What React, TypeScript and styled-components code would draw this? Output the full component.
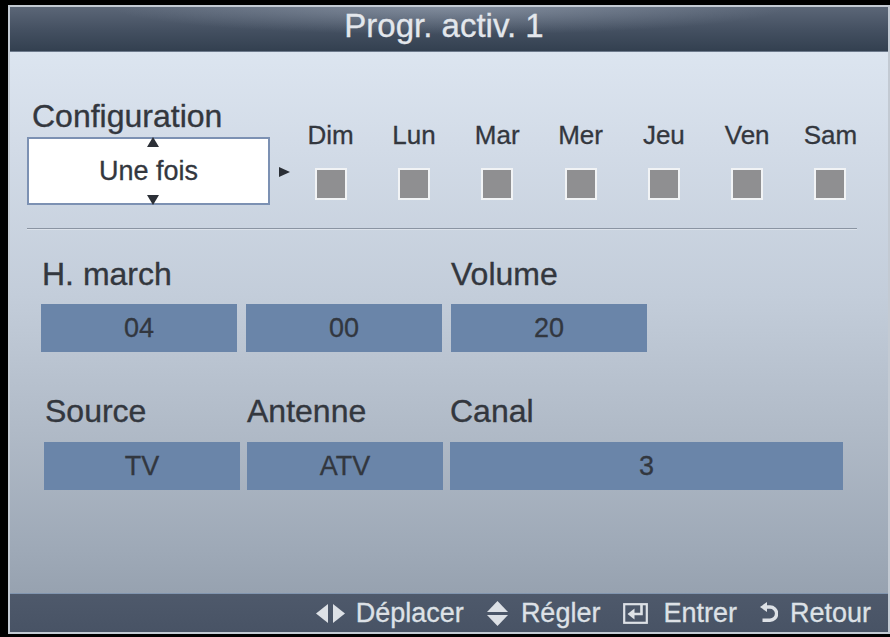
import React from "react";
import styled, { createGlobalStyle } from "styled-components";

const Global = createGlobalStyle`
  html, body { margin: 0; padding: 0; background: #000; }
  body { font-family: "Liberation Sans", Arial, Helvetica, sans-serif; }
  * { box-sizing: border-box; }
`;

const Screen = styled.div`
  margin: 5px 0 0 8px;
  width: 882px;
  height: 629px;
  border: 2px solid #c3cad3;
  display: flex;
  flex-direction: column;
  overflow: hidden;
`;

const Header = styled.header`
  flex: none;
  height: 45px;
  display: flex;
  justify-content: center;
  align-items: flex-start;
  padding-top: 2px;
  background:
    radial-gradient(ellipse 55% 90% at 50% 0%, rgba(185, 196, 212, 0.4), rgba(185, 196, 212, 0) 70%),
    linear-gradient(to bottom, #5b6677 0%, #434f60 55%, #334050 100%);
  border-bottom: 1px solid #6d7a8c;
`;

const Title = styled.h1`
  margin: 0 10px 0 0;
  font-weight: normal;
  font-size: 33px;
  line-height: 33px;
  color: #e3e7ec;
  -webkit-text-stroke: 0.3px #e3e7ec;
`;

const Body = styled.main`
  flex: 1;
  display: flex;
  flex-direction: column;
  background: linear-gradient(
    to bottom,
    #dce5f0 0%,
    #d2dbe7 18%,
    #c3cdda 45%,
    #b0bac7 70%,
    #9ea9b7 92%,
    #97a2b0 100%
  );
  color: #33373e;
`;

const TopSection = styled.section`
  display: flex;
  align-items: flex-start;
  padding: 48px 0 0 17px;
`;

const ConfigColumn = styled.div`
  width: 243px;
  display: flex;
  flex-direction: column;
`;

const BigLabel = styled.div<{ $indent?: number }>`
  font-size: 32px;
  line-height: 32px;
  padding-left: ${(p) => p.$indent ?? 1}px;
  white-space: nowrap;
  color: #33373e;
  -webkit-text-stroke: 0.35px #33373e;
`;

const ConfigBox = styled.div`
  position: relative;
  margin-top: 5px;
  height: 68px;
  border: 2px solid #7c91b3;
  background: #fff;
  display: flex;
  align-items: center;
  justify-content: center;
  font-size: 27px;
  line-height: 27px;
  color: #33373e;
  -webkit-text-stroke: 0.3px #33373e;
`;

const SpinArrow = styled.span<{ $down?: boolean }>`
  position: absolute;
  left: 118px;
  ${(p) => (p.$down ? "bottom: -2px;" : "top: -2px;")}
  width: 0;
  height: 0;
  border-left: 6px solid transparent;
  border-right: 6px solid transparent;
  ${(p) =>
    p.$down
      ? "border-top: 10px solid #2c3037;"
      : "border-bottom: 10px solid #2c3037;"}
`;

const RightArrow = styled.span`
  flex: none;
  margin: 67px 0 0 9px;
  width: 0;
  height: 0;
  border-top: 5.5px solid transparent;
  border-bottom: 5.5px solid transparent;
  border-left: 11px solid #2a2e35;
`;

const Days = styled.div`
  margin: 22px 0 0 -1px;
  display: grid;
  grid-template-columns: repeat(7, 83.3px);
  grid-template-rows: 26px 32px;
  row-gap: 20px;
  justify-items: center;
`;

const DayLabel = styled.span`
  font-size: 26px;
  line-height: 26px;
  color: #33373e;
  -webkit-text-stroke: 0.3px #33373e;
`;

const Check = styled.span`
  width: 32px;
  height: 32px;
  background: #8f8f91;
  border: 2px solid #f1f3f5;
`;

const Divider = styled.hr`
  margin: 23px 31px 0 17px;
  border: none;
  height: 1px;
  background: #8a94a2;
  box-shadow: 0 1px 0 rgba(255, 255, 255, 0.35);
`;

const FieldGrid = styled.section<{ $cols: string; $gap: number; $left: number; $top: number; $labelGap: number }>`
  display: grid;
  grid-template-columns: ${(p) => p.$cols};
  grid-template-rows: 32px 48px;
  column-gap: ${(p) => p.$gap}px;
  row-gap: ${(p) => p.$labelGap}px;
  padding-left: ${(p) => p.$left}px;
  margin-top: ${(p) => p.$top}px;
`;

const ValueBox = styled.div<{ $col?: string }>`
  grid-row: 2;
  ${(p) => (p.$col ? `grid-column: ${p.$col};` : "")}
  background: #6a85a9;
  display: flex;
  align-items: center;
  justify-content: center;
  font-size: 27px;
  line-height: 27px;
  color: #32373f;
  -webkit-text-stroke: 0.3px #32373f;
`;

const FieldLabel = styled(BigLabel)<{ $col: number }>`
  grid-row: 1;
  grid-column: ${(p) => p.$col};
`;

const Footer = styled.footer`
  flex: none;
  height: 39px;
  display: flex;
  justify-content: flex-end;
  align-items: center;
  gap: 23px;
  padding-right: 17px;
  background: linear-gradient(to bottom, #4e596b, #485365);
  border-top: 1px solid #8195af;
  color: #dde1e6;
`;

const Hint = styled.span<{ $gap: number }>`
  display: flex;
  align-items: center;
  gap: ${(p) => p.$gap}px;
  font-size: 27px;
  line-height: 27px;
  white-space: nowrap;
  -webkit-text-stroke: 0.3px #dde1e6;
`;

const Icon = styled.svg`
  display: block;
  flex: none;
`;

const MoveIcon = () => (
  <Icon width="29" height="19" viewBox="0 0 29 19">
    <polygon points="12,0 12,19 0,9.5" fill="#dde1e6" />
    <polygon points="17,0 29,9.5 17,19" fill="#dde1e6" />
  </Icon>
);

const AdjustIcon = () => (
  <Icon width="21" height="25" viewBox="0 0 21 25">
    <polygon points="10.5,0 21,11 0,11" fill="#dde1e6" />
    <polygon points="0,14 21,14 10.5,25" fill="#dde1e6" />
  </Icon>
);

const EnterIcon = () => (
  <Icon width="25" height="21" viewBox="0 0 25 21">
    <rect x="1.2" y="1.2" width="22.6" height="18.6" fill="none" stroke="#dde1e6" strokeWidth="2.2" />
    <path d="M18.5 1 V11 H10" fill="none" stroke="#dde1e6" strokeWidth="2.6" />
    <polygon points="4.5,11 11.5,5.5 11.5,16.5" fill="#dde1e6" />
  </Icon>
);

const ReturnIcon = () => (
  <Icon width="18" height="22" viewBox="0 0 18 22">
    <path d="M5 5 H10 A6.6 6.6 0 0 1 10 18.2 H2.5" fill="none" stroke="#dde1e6" strokeWidth="3.4" />
    <polygon points="0,5 7,0 7,10" fill="#dde1e6" />
  </Icon>
);

const days = ["Dim", "Lun", "Mar", "Mer", "Jeu", "Ven", "Sam"];

export default function App() {
  return (
    <>
      <Global />
      <Screen>
        <Header>
          <Title>Progr. activ. 1</Title>
        </Header>
        <Body>
          <TopSection>
            <ConfigColumn>
              <BigLabel $indent={5}>Configuration</BigLabel>
              <ConfigBox>
                <SpinArrow />
                Une fois
                <SpinArrow $down />
              </ConfigBox>
            </ConfigColumn>
            <RightArrow />
            <Days>
              {days.map((d) => (
                <DayLabel key={d}>{d}</DayLabel>
              ))}
              {days.map((d) => (
                <Check key={d + "-c"} />
              ))}
            </Days>
          </TopSection>
          <Divider />
          <FieldGrid $cols="196px 196px 196px" $gap={9} $left={31} $top={29} $labelGap={14}>
            <FieldLabel $col={1}>H. march</FieldLabel>
            <FieldLabel $col={3} $indent={0}>Volume</FieldLabel>
            <ValueBox $col="1">04</ValueBox>
            <ValueBox $col="2">00</ValueBox>
            <ValueBox $col="3">20</ValueBox>
          </FieldGrid>
          <FieldGrid $cols="196px 196px 393px" $gap={7} $left={34} $top={43} $labelGap={15}>
            <FieldLabel $col={1}>Source</FieldLabel>
            <FieldLabel $col={2} $indent={0}>Antenne</FieldLabel>
            <FieldLabel $col={3} $indent={0}>Canal</FieldLabel>
            <ValueBox $col="1">TV</ValueBox>
            <ValueBox $col="2">ATV</ValueBox>
            <ValueBox $col="3">3</ValueBox>
          </FieldGrid>
        </Body>
        <Footer>
          <Hint $gap={11}>
            <MoveIcon />
            Déplacer
          </Hint>
          <Hint $gap={13}>
            <AdjustIcon />
            Régler
          </Hint>
          <Hint $gap={15}>
            <EnterIcon />
            Entrer
          </Hint>
          <Hint $gap={12}>
            <ReturnIcon />
            Retour
          </Hint>
        </Footer>
      </Screen>
    </>
  );
}
